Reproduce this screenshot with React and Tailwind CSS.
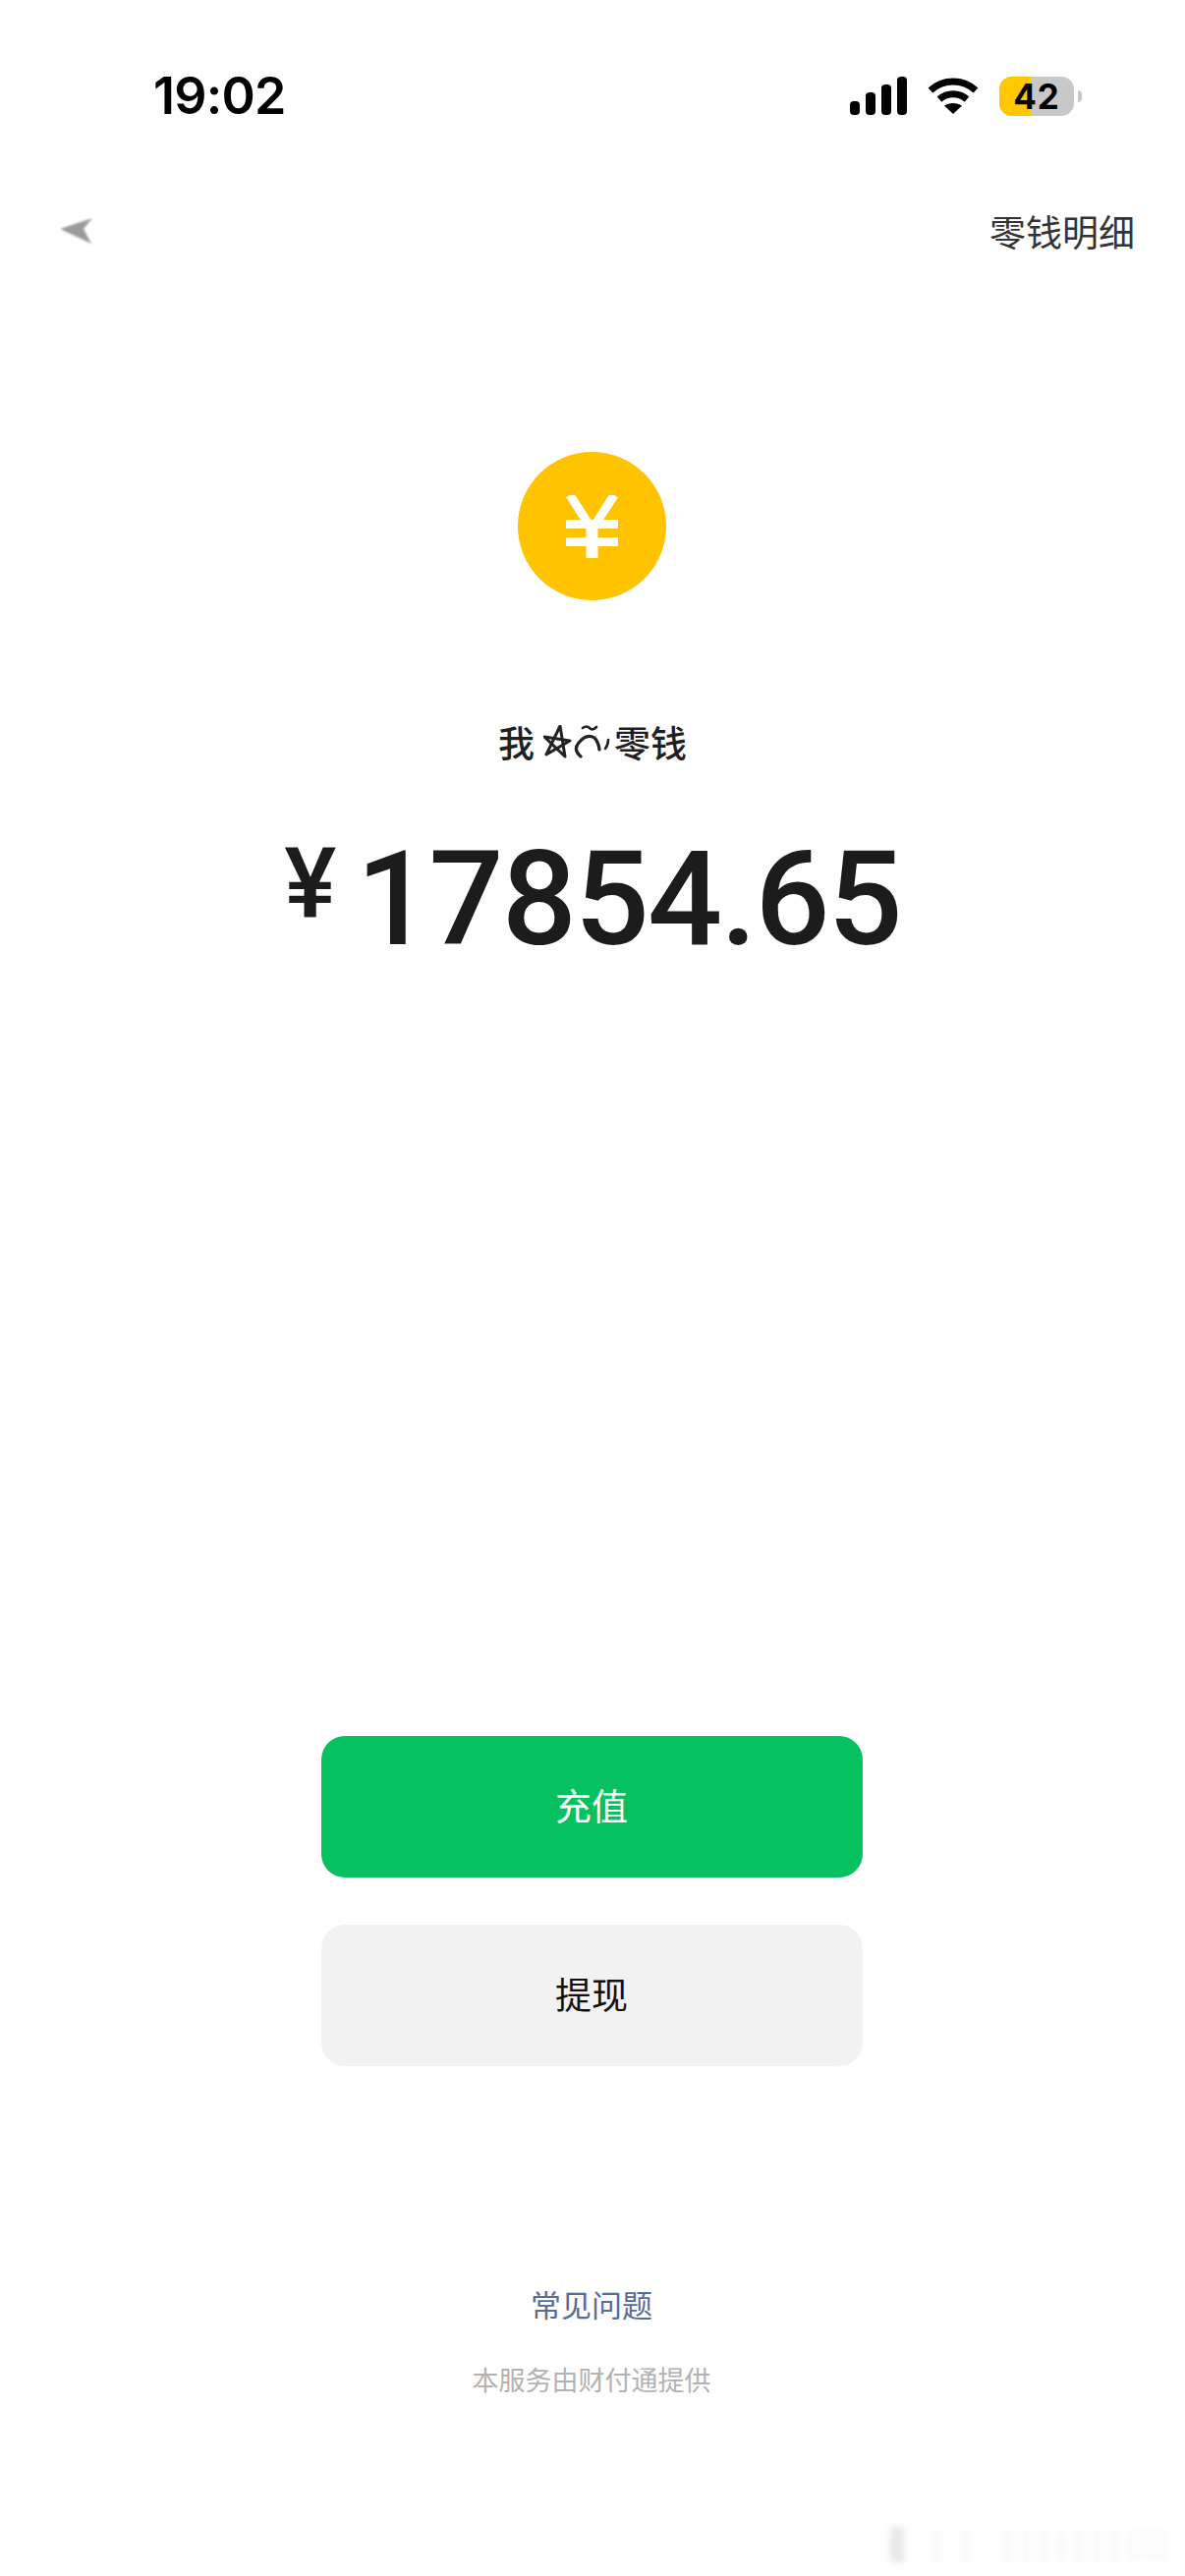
import React from 'react';

const cjk = 'font-["Noto_Sans_CJK_SC","Noto_Sans",sans-serif]';

const SignalIcon = () => (
  <svg width="60" height="40" viewBox="0 0 60 40" fill="#000">
    <rect x="0" y="25" width="10" height="14" rx="4" />
    <rect x="16" y="16" width="10" height="23" rx="4" />
    <rect x="32" y="8" width="10" height="31" rx="4" />
    <rect x="48" y="0" width="10" height="39" rx="4" />
  </svg>
);

const WifiIcon = () => (
  <svg width="52" height="38" viewBox="0 0 52 38" fill="none" stroke="#000" strokeWidth="7">
    <path d="M3 13C16 1 36 1 49 13" />
    <path d="M12 22C20 15 32 15 40 22" />
    <path d="M17 28.5C22 25 30 25 35 28.5L26 37Z" fill="#000" stroke="none" />
  </svg>
);

const Battery = () => (
  <div className="flex items-center">
    <div className="relative w-[76px] h-[40px] rounded-[13px] bg-[#c8c8c8] overflow-hidden flex items-center justify-center">
      <div className="absolute inset-y-0 left-0 w-[32px] bg-[#ffc800]" />
      <span className="relative font-['Inter',sans-serif] font-bold text-[35px] leading-none text-black tracking-[1px]">42</span>
    </div>
    <div className="ml-[4px] w-[4px] h-[12px] rounded-r-full bg-[#c8c8c8]" />
  </div>
);

const BackArrow = () => (
  <svg width="36" height="30" viewBox="0 0 36 30" className="blur-[0.8px]">
    <path d="M1 12L34 1L25 12L33 27Z" fill="#9a9a9a" />
  </svg>
);

const CoinYen = () => (
  <svg width="53" height="64" viewBox="0 0 53 64" fill="none" stroke="#fff" strokeWidth="9">
    <path d="M4 0L26.5 35L49 0" />
    <path d="M0 29.5H53" />
    <path d="M0 47.5H53" />
    <path d="M26.5 30V64" strokeWidth="12" />
  </svg>
);

// the odd decorated character between 我 and 零钱
const Scribble = () => (
  <svg width="68" height="34" viewBox="0 0 68 34" fill="none" stroke="#222" strokeWidth="3" strokeLinecap="round" strokeLinejoin="round">
    <path d="M17 1L22 32L1 12L27 16L3 30L17 1Z" />
    <path d="M40 3Q44 0 47 3T54 2" strokeWidth="2.6" />
    <path d="M38 32Q30 25 36 18Q44 8 52 13Q56 17 57 25" strokeWidth="3.2" />
    <path d="M66 15Q66 20 63 24" strokeWidth="2.6" />
  </svg>
);

const Watermark = () => (
  <svg width="296" height="40" viewBox="0 0 296 40" className="absolute right-[10px] bottom-[12px] blur-[3px]">
    <rect x="6" y="2" width="14" height="36" fill="#000" opacity="0.09" />
    {[50, 78, 122, 140, 158, 176, 194, 212, 230, 248].map((x) => (
      <rect key={x} x={x} y="6" width="8" height="32" fill="#000" opacity="0.025" />
    ))}
    <path d="M258 8H288M258 16H288M258 24H288M258 32H288" stroke="#000" strokeOpacity="0.06" strokeWidth="2" />
  </svg>
);

export default function App() {
  return (
    <div className={`relative w-[1206px] h-[2622px] bg-white flex flex-col items-center overflow-hidden ${cjk}`}>
      <div className="w-full h-[40px] mt-[78px] pl-[156px] pr-[105px] flex items-center justify-between">
        <span className="font-['Inter',sans-serif] font-semibold text-[52px] leading-none text-black tracking-[-0.8px]">19:02</span>
        <div className="flex items-center">
          <SignalIcon />
          <div className="ml-[19px]"><WifiIcon /></div>
          <div className="ml-[21px]"><Battery /></div>
        </div>
      </div>

      <div className="w-full h-[60px] mt-[88px] pl-[60px] pr-[51px] flex items-center justify-between">
        <BackArrow />
        <span className="text-[37px] leading-none text-[#333333] -mt-[1px]">零钱明细</span>
      </div>

      <div className="w-[151px] h-[151px] mt-[194px] -translate-x-[1px] rounded-full bg-[#ffc300] flex items-center justify-center">
        <CoinYen />
      </div>

      <div className="h-[50px] mt-[119px] flex items-center text-[37px] leading-none font-medium text-[#1f1f1f]">
        <span>我</span>
        <div className="ml-[9px] mr-[4px]"><Scribble /></div>
        <span>零钱</span>
      </div>

      <div className="h-[140px] mt-[66px] flex items-start font-['Roboto',sans-serif] font-medium text-[#1c1c1c]">
        <span className="text-[100px] leading-[140px] mr-[20px] -mt-[16px]">¥</span>
        <span className="text-[134px] leading-[140px] tracking-[-2px]">17854.65</span>
      </div>

      <button className="w-[551px] h-[144px] mt-[781px] -translate-x-[1px] rounded-[24px] bg-[#07c160] text-white text-[37px] flex items-center justify-center">
        <span className="-mt-[2px]">充值</span>
      </button>
      <button className="w-[551px] h-[144px] mt-[48px] -translate-x-[1px] rounded-[24px] bg-[#f2f2f2] text-[#111111] text-[37px] flex items-center justify-center">
        <span className="-mt-[2px]">提现</span>
      </button>

      <div className="mt-[222px] -translate-x-[1px] text-[31px] leading-[40px] text-[#576b95]">常见问题</div>
      <div className="mt-[39px] -translate-x-[1px] text-[27px] leading-[36px] text-[#b2b2b2]">本服务由财付通提供</div>

      <Watermark />
    </div>
  );
}
